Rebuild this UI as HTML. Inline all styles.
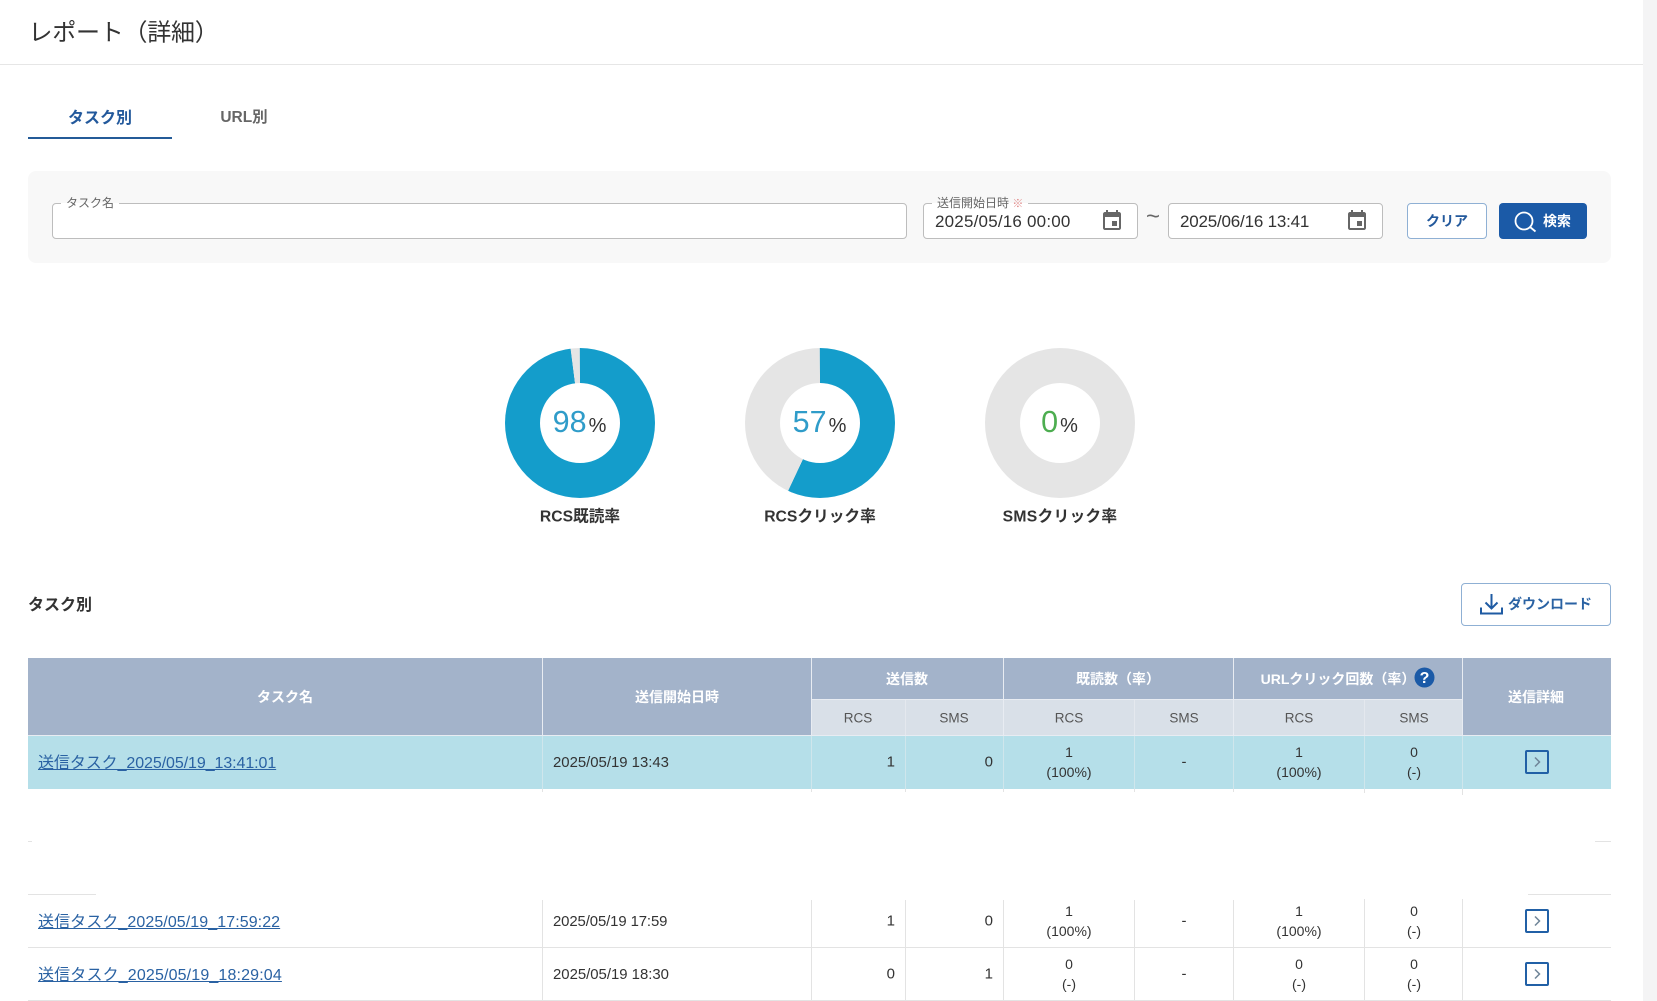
<!DOCTYPE html>
<html lang="ja"><head><meta charset="utf-8"><title>レポート（詳細）</title>
<style>
html,body{margin:0;padding:0;background:#fff}
body{width:1657px;height:1001px;position:relative;overflow:hidden;font-family:"Liberation Sans","Noto Sans CJK JP",sans-serif;color:#333}
.a{position:absolute;white-space:nowrap}
.c{transform:translate(-50%,-50%)}
.r{transform:translate(-100%,-50%)}
.l{transform:translateY(-50%)}
.box{position:absolute;box-sizing:border-box;background:#fff;border:1px solid #bdbdbd;border-radius:4px;top:203px;height:36px}
.lbl{position:absolute;top:196px;height:14px;line-height:14px;font-size:12px;color:#666;background:linear-gradient(#f8f8f8 0 7px,#fff 7px);padding:0 5px;white-space:nowrap}
.dt{font-size:17px;color:#333;top:222px}
.donut{position:absolute;top:348px;width:150px;height:150px;border-radius:50%}
.donut i{position:absolute;left:35px;top:35px;width:80px;height:80px;border-radius:50%;background:#fff}
.pct{top:423.500px;font-size:30.500px;line-height:30px;font-weight:400}
.pct span{font-size:20px;color:#333;margin-left:2px}
.dl{top:515px;font-size:15.7px;font-weight:700;color:#333}
.h{position:absolute;background:#a3b3ca}
.s{position:absolute;background:#d9e0e8;top:700px;height:35px}
.v{position:absolute;width:1px;background:#e3e3e3}
.w{position:absolute;width:1px;background:#fff}
.ln{position:absolute;height:1px;background:#e3e3e3}
.th{color:#fff;font-size:14px;font-weight:700}
.sh{font-size:13.5px;color:#555;top:718px}
.lk{color:#2a62a3;text-decoration:underline;font-size:16px;left:38px}
.d{font-size:14.9px;left:553px;color:#333}
.n{font-size:15px;color:#333}
.t{font-size:14px;color:#333;text-align:center;line-height:20px}
.ar{position:absolute;left:1525px;width:24px;height:24px}
</style></head><body>

<div class="a l" style="left:28.500px;top:30px;font-size:24px;letter-spacing:-.25px;color:#333;font-weight:400">レポート（詳細）</div>
<div class="ln" style="left:0;top:64px;width:1643px;background:#e6e6e6"></div>
<div class="a" style="left:1643px;top:0;width:14px;height:1001px;background:#f4f4f5"></div>

<div class="a c" style="left:100px;top:116px;font-size:16px;font-weight:700;color:#23599c">タスク別</div>
<div class="a c" style="left:244px;top:116px;font-size:15.5px;font-weight:700;color:#666">URL別</div>
<div class="a" style="left:28px;top:137px;width:144px;height:2px;background:#245b98"></div>

<div class="a" style="left:28px;top:171px;width:1583px;height:92px;background:#f8f8f8;border-radius:8px"></div>
<div class="box" style="left:52px;width:855px"></div>
<div class="lbl" style="left:61px">タスク名</div>
<div class="box" style="left:923px;width:215px"></div>
<div class="lbl" style="left:932px">送信開始日時 <span style="color:#e08a8a;font-size:11px">※</span></div>
<div class="box" style="left:1168px;width:215px"></div>
<div class="a l dt" style="left:935px;letter-spacing:.2px">2025/05/16 00:00</div>
<div class="a l dt" style="left:1180px;letter-spacing:-.2px">2025/06/16 13:41</div>
<svg class="a" style="left:1100px;top:209px" width="24" height="24" viewBox="0 0 24 24"><path fill="#666" d="M17 12h-5v5h5v-5zM16 1v2H8V1H6v2H5c-1.11 0-1.99.9-1.99 2L3 19c0 1.1.89 2 2 2h14c1.1 0 2-.9 2-2V5c0-1.1-.9-2-2-2h-1V1h-2zm3 18H5V8h14v11z"/></svg>
<svg class="a" style="left:1345px;top:209px" width="24" height="24" viewBox="0 0 24 24"><path fill="#666" d="M17 12h-5v5h5v-5zM16 1v2H8V1H6v2H5c-1.11 0-1.99.9-1.99 2L3 19c0 1.1.89 2 2 2h14c1.1 0 2-.9 2-2V5c0-1.1-.9-2-2-2h-1V1h-2zm3 18H5V8h14v11z"/></svg>
<div class="a c" style="left:1153px;top:217px;font-size:24px;color:#666">~</div>

<div class="a" style="left:1407px;top:203px;width:80px;height:36px;box-sizing:border-box;background:#fff;border:1px solid #8fb0d4;border-radius:4px"></div>
<div class="a c" style="left:1447px;top:221px;font-size:14px;font-weight:700;color:#23599c">クリア</div>
<div class="a" style="left:1499px;top:203px;width:88px;height:36px;background:#1b5aa7;border-radius:4px"></div>
<svg class="a" style="left:1512px;top:209px" width="26" height="26" viewBox="0 0 26 26" fill="none" stroke="#fff" stroke-width="1.800"><circle cx="12" cy="12" r="8.500"/><path d="M18 18l5.500 4.500"/></svg>
<div class="a c" style="left:1557px;top:221px;font-size:14px;font-weight:700;color:#fff">検索</div>

<div class="donut" style="left:505px;background:conic-gradient(#149dcb 0 352.6deg,#e5e5e5 352.9deg 359.7deg,#149dcb 360deg)"><i></i></div>
<div class="donut" style="left:745px;background:conic-gradient(#149dcb 0 205deg,#e5e5e5 205.3deg 359.7deg,#149dcb 360deg)"><i></i></div>
<div class="donut" style="left:985px;background:#e5e5e5"><i></i></div>
<div class="a c pct" style="left:579.500px;color:#2f9cc9">98<span>%</span></div>
<div class="a c pct" style="left:819.500px;color:#2f9cc9">57<span>%</span></div>
<div class="a c pct" style="left:1059.500px;color:#4dad50">0<span>%</span></div>
<div class="a c dl" style="left:580px">RCS既読率</div>
<div class="a c dl" style="left:820px">RCSクリック率</div>
<div class="a c dl" style="left:1060px;letter-spacing:.3px">SMSクリック率</div>

<div class="a l" style="left:28px;top:603px;font-size:16px;font-weight:700;color:#333">タスク別</div>
<div class="a" style="left:1461px;top:583px;width:150px;height:43px;box-sizing:border-box;background:#fff;border:1px solid #8fb0d4;border-radius:4px"></div>
<svg class="a" style="left:1479px;top:593px" width="25" height="22" viewBox="0 0 25 22" fill="none" stroke="#1f5ba3" stroke-width="2"><path d="M12.500 1v14M6.500 9.500l6 6 6-6M2 14.500v6h21v-6"/></svg>
<div class="a l" style="left:1508px;top:604px;font-size:14px;font-weight:700;color:#2a62a3">ダウンロード</div>

<!-- table header -->
<div class="h" style="left:28px;top:658px;width:1583px;height:77px"></div>
<div class="s" style="left:812px;width:650px"></div>
<div class="w" style="left:542px;top:658px;height:77px;background:#e8ecf2"></div>
<div class="w" style="left:811px;top:658px;height:77px;background:#e8ecf2"></div>
<div class="w" style="left:905px;top:700px;height:35px;background:#e4e8ee"></div>
<div class="w" style="left:1003px;top:658px;height:77px;background:#e8ecf2"></div>
<div class="w" style="left:1134px;top:700px;height:35px;background:#e4e8ee"></div>
<div class="w" style="left:1233px;top:658px;height:77px;background:#e8ecf2"></div>
<div class="w" style="left:1364px;top:700px;height:35px;background:#e4e8ee"></div>
<div class="w" style="left:1462px;top:658px;height:77px;background:#e8ecf2"></div>
<div class="a" style="left:812px;top:699px;width:650px;height:1px;background:#e8ecf2"></div>

<div class="a c th" style="left:285px;top:697px">タスク名</div>
<div class="a c th" style="left:677px;top:697px">送信開始日時</div>
<div class="a c th" style="left:907px;top:679px">送信数</div>
<div class="a c th" style="left:1118px;top:679px">既読数（率）</div>
<div class="a c th" style="left:1338px;top:679px">URLクリック回数（率）</div>
<svg class="a" style="left:1414px;top:667px" width="21" height="21" viewBox="0 0 21 21"><circle cx="10.500" cy="10.500" r="10" fill="#1b5aa7"/><text x="10.500" y="16" text-anchor="middle" font-family="Liberation Sans" font-size="16" font-weight="700" fill="#fff">?</text></svg>
<div class="a c th" style="left:1536px;top:697px">送信詳細</div>

<div class="a c sh" style="left:858px">RCS</div>
<div class="a c sh" style="left:954px">SMS</div>
<div class="a c sh" style="left:1069px">RCS</div>
<div class="a c sh" style="left:1184px">SMS</div>
<div class="a c sh" style="left:1299px">RCS</div>
<div class="a c sh" style="left:1414px">SMS</div>

<!-- row 1 -->
<div class="a" style="left:28px;top:736px;width:1583px;height:53px;background:#b5dfe9"></div>
<div class="a" style="left:28px;top:735px;width:1583px;height:1px;background:#e8ecf2"></div>
<div class="w" style="left:542px;top:736px;height:53px;background:#cfe6ec"></div>
<div class="w" style="left:811px;top:736px;height:53px;background:#cfe6ec"></div>
<div class="w" style="left:905px;top:736px;height:53px;background:#cfe6ec"></div>
<div class="w" style="left:1003px;top:736px;height:53px;background:#cfe6ec"></div>
<div class="w" style="left:1134px;top:736px;height:53px;background:#cfe6ec"></div>
<div class="w" style="left:1233px;top:736px;height:53px;background:#cfe6ec"></div>
<div class="w" style="left:1364px;top:736px;height:53px;background:#cfe6ec"></div>
<div class="w" style="left:1462px;top:736px;height:53px;background:#cfe6ec"></div>
<div class="v" style="left:542px;top:789px;height:3px"></div>
<div class="v" style="left:811px;top:789px;height:3px"></div>
<div class="v" style="left:905px;top:789px;height:3px"></div>
<div class="v" style="left:1003px;top:789px;height:3px"></div>
<div class="v" style="left:1134px;top:789px;height:3px"></div>
<div class="v" style="left:1233px;top:789px;height:3px"></div>
<div class="v" style="left:1364px;top:789px;height:4px"></div>
<div class="v" style="left:1462px;top:789px;height:6px"></div>

<div class="a l lk" style="top:761px;letter-spacing:-.08px">送信タスク_2025/05/19_13:41:01</div>
<div class="a l d" style="top:763px">2025/05/19 13:43</div>
<div class="a r n" style="left:895px;top:762px">1</div>
<div class="a r n" style="left:993px;top:762px">0</div>
<div class="a c t" style="left:1069px;top:762px">1<br>(100%)</div>
<div class="a c n" style="left:1184px;top:762px">-</div>
<div class="a c t" style="left:1299px;top:762px">1<br>(100%)</div>
<div class="a c t" style="left:1414px;top:762px">0<br>(-)</div>
<svg class="ar" style="top:750px" viewBox="0 0 24 24" fill="none"><rect x="1" y="1" width="22" height="22" rx="1" stroke="#2160a6" stroke-width="2"/><path d="M10 7.500l4.500 4.500-4.500 4.500" stroke="#6f8598" stroke-width="1.500"/></svg>

<!-- fragments -->
<div class="ln" style="left:28px;top:841px;width:4px"></div>
<div class="ln" style="left:1595px;top:841px;width:16px"></div>
<div class="ln" style="left:28px;top:894px;width:68px"></div>
<div class="ln" style="left:1528px;top:894px;width:83px"></div>

<!-- row 4,5 -->
<div class="v" style="left:542px;top:900px;height:101px"></div>
<div class="v" style="left:811px;top:900px;height:101px"></div>
<div class="v" style="left:905px;top:900px;height:101px"></div>
<div class="v" style="left:1003px;top:900px;height:101px"></div>
<div class="v" style="left:1134px;top:900px;height:101px"></div>
<div class="v" style="left:1233px;top:900px;height:101px"></div>
<div class="v" style="left:1364px;top:899px;height:102px"></div>
<div class="v" style="left:1462px;top:899px;height:102px"></div>
<div class="ln" style="left:28px;top:947px;width:1583px"></div>
<div class="ln" style="left:28px;top:1000px;width:1583px"></div>

<div class="a l lk" style="top:920px;letter-spacing:.08px">送信タスク_2025/05/19_17:59:22</div>
<div class="a l d" style="top:922px;letter-spacing:-.1px">2025/05/19 17:59</div>
<div class="a r n" style="left:895px;top:921px">1</div>
<div class="a r n" style="left:993px;top:921px">0</div>
<div class="a c t" style="left:1069px;top:921px">1<br>(100%)</div>
<div class="a c n" style="left:1184px;top:921px">-</div>
<div class="a c t" style="left:1299px;top:921px">1<br>(100%)</div>
<div class="a c t" style="left:1414px;top:921px">0<br>(-)</div>
<svg class="ar" style="top:909px" viewBox="0 0 24 24" fill="none"><rect x="1" y="1" width="22" height="22" rx="1" stroke="#2160a6" stroke-width="2"/><path d="M10 7.500l4.500 4.500-4.500 4.500" stroke="#6f8598" stroke-width="1.500"/></svg>

<div class="a l lk" style="top:973px;letter-spacing:.15px">送信タスク_2025/05/19_18:29:04</div>
<div class="a l d" style="top:975px">2025/05/19 18:30</div>
<div class="a r n" style="left:895px;top:974px">0</div>
<div class="a r n" style="left:993px;top:974px">1</div>
<div class="a c t" style="left:1069px;top:974px">0<br>(-)</div>
<div class="a c n" style="left:1184px;top:974px">-</div>
<div class="a c t" style="left:1299px;top:974px">0<br>(-)</div>
<div class="a c t" style="left:1414px;top:974px">0<br>(-)</div>
<svg class="ar" style="top:962px" viewBox="0 0 24 24" fill="none"><rect x="1" y="1" width="22" height="22" rx="1" stroke="#2160a6" stroke-width="2"/><path d="M10 7.500l4.500 4.500-4.500 4.500" stroke="#6f8598" stroke-width="1.500"/></svg>

</body></html>
